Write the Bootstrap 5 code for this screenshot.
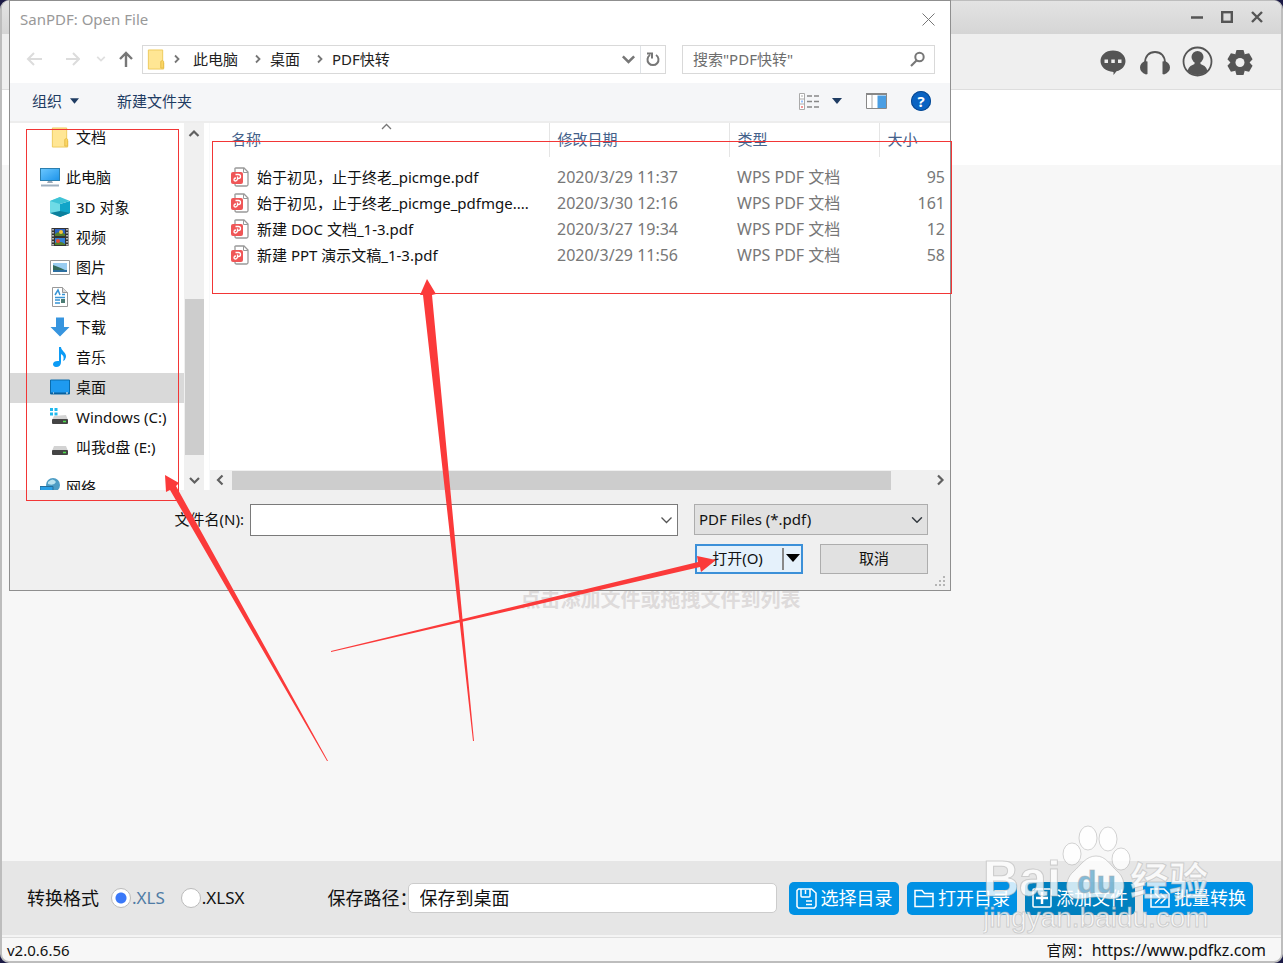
<!DOCTYPE html>
<html lang="zh-CN">
<head>
<meta charset="utf-8">
<meta name="viewport" content="width=device-width, initial-scale=1">
<title>SanPDF</title>
<link href="https://cdn.jsdelivr.net/npm/bootstrap@5.3.0/dist/css/bootstrap.min.css" rel="stylesheet">
<style>
  body { background:#1b1a45; font-family:"Noto Sans","Noto Sans CJK SC",sans-serif; font-size:15px; line-height:20px; color:#111; }
  svg { display:block; flex:none; }
  button { font:inherit; color:inherit; }
  .bare { border:0; background:none; padding:0; }
  /* main window */
  .app { border:2px solid #bdbdbd; border-top-width:1px; border-radius:9px; background:#f7f7f7; overflow:hidden; }
  .app-title { height:33px; background:linear-gradient(#e3e3e3,#d5d5d5); padding:0 18px 2px 0; gap:18px; color:#555; }
  .app-tools { height:56px; background:#efefef; border-bottom:1px solid #ddd; padding-right:26px; gap:12px; color:#555; }
  .app-tabs { height:75px; background:#fff; }
  .drop-hint { font-size:20px; line-height:28px; font-weight:700; color:#dedbdb; padding:421px 0 0 38px; }
  .app-actions { height:76px; background:#e6e6e6; padding:0 28px 0 25px; font-size:17px; border-bottom:2px solid #f4f4f4; }
  .app-actions label { white-space:nowrap; }
  .caption-text { font-size:18px; white-space:nowrap; }
  .path-label { margin:0 -10px 0 83px; }
  .app-actions .form-check-input { width:20px; height:20px; margin:0 1px 0 0; border-color:#bbb; background-image:none; flex:none; }
  .app-actions .form-check-input:checked { background:radial-gradient(#3a78f8 0 5px,#fff 6px); }
  .path-box { height:30px; border:1px solid #ccc; border-radius:5px; font-size:18px; padding:0 11px 2px; color:#111; min-width:0; }
  .btn-act { height:33px; width:110px; background:#0091e4; color:#fff; border:0; border-radius:5px; padding:0; font-size:18px; line-height:24px; }
  .btn-act.deep { background:#0080bf; }
  .app-status { height:24px; border-top:1px solid #ddd; padding:0 15px 0 5px; }
  .app-status a { color:inherit; text-decoration:none; font-size:16px; }
  /* open-file dialog */
  .dlg { left:9px; right:332px; top:0; background:#fff; border:1px solid #8f8f8f; z-index:2; }
  .dlg-title { height:38px; padding:0 14px 2px 10px; color:#999; }
  .dlg-nav { height:44px; padding:0 15px 4px 16px; color:#222; }
  .frame { height:29px; border:1px solid #d9d9d9; }
  .frame input { border:0; outline:0; background:none; color:#666; min-width:0; }
  .frame input::placeholder { color:#6d6d6d; opacity:1; }
  .search-box { width:253px; }
  .dlg-bar { height:40px; background:#f5f6f8; border-bottom:2px solid #ededed; padding:0 19px 2px 22px; color:#1f3c63; gap:38px; }
  .help-btn { width:20px; height:20px; background:#0a63c2; box-shadow:inset 0 0 0 1px #0b4990; }
  .dlg-body { height:367px; }
  .tree { width:174px; flex:none; overflow:hidden; }
  .tree a { height:30px; color:#111; text-decoration:none; padding:0 0 2px 40px; gap:6px; white-space:nowrap; flex:none; }
  .tree a.root { padding-left:30px; margin-top:10px; }
  .tree a.on { background:#d9d9d9; }
  .vbar { width:20px; flex:none; background:#f0f0f0; color:#606060; }
  .vbar .thumb { height:156px; width:19px; background:#cdcdcd; margin:auto 0 24px; }
  .pane { min-width:0; margin-left:5px; }
  .hbar { height:20px; background:#f0f0f0; color:#606060; }
  .hbar .thumb { height:19px; background:#cdcdcd; margin:0 43px 0 6px; }
  .files { table-layout:fixed; width:100%; margin:0; }
  .files th { height:34px; font-weight:400; color:#44618a; border-left:1px solid #e5e5e5; padding:0 0 2px 8px; white-space:nowrap; }
  .files th:first-child { border:0; padding-left:21px; }
  .files tbody::before { content:""; display:block; height:7px; }
  .files td { height:26px; padding:0 0 0 8px; color:#777; font-size:16px; white-space:nowrap; }
  .files td:first-child { padding-left:21px; color:#111; font-size:15px; }
  .files td:last-child { text-align:right; padding:0 5px 0 0; }
  .w-date { width:180px; } .w-type { width:150px; } .w-size { width:71px; }
  .sort-mark { left:171px; top:0; }
  .dlg-foot { background:#f0f0f0; padding:14px 22px 16px 22px; }
  .name-box { border:1px solid #7a7a7a; background:#fff; height:32px; }
  .name-box input { border:0; outline:0; min-width:0; }
  .name-label { width:218px; padding:0 6px 2px 0; text-align:right; }
  .right-col { width:234px; margin-left:16px; }
  .type-box { height:31px; border:1px solid #adadad; border-radius:0; background-color:#e1e1e1; font-size:15px; line-height:20px; padding:3px 28px 5px 4px; color:#111; background-position:right 4px center; background-size:12px; }
  .btn-dlg { height:30px; border:1px solid #adadad; background:#e1e1e1; width:108px; padding:0 0 2px; }
  .btn-open { border:2px solid #3c90d8; background:#e5f1fb; padding:0; margin-right:17px; }
  .btn-open button { height:26px; padding-bottom:2px; }
  .btn-open .drop { border-left:2px solid #888; width:19px; height:22px; padding-left:2px; }
  .grip { right:3px; bottom:2px; }
  /* overlays */
  .marks { left:0; top:0; z-index:4; pointer-events:none; }
  .wmark { right:60px; bottom:20px; z-index:1; pointer-events:none; }
</style>
</head>
<body class="vh-100 overflow-hidden position-relative">

<svg width="0" height="0" class="position-absolute">
  <symbol id="folder" viewBox="0 0 18 22"><path d="M1 1h15v13l1 1v6H1z" fill="#ffe694" stroke="#eec95a"/><path d="M14 20v-7q2-2 3 0v7z" fill="#fbd664" stroke="#e6bd48"/></symbol>
  <symbol id="pdf" viewBox="0 0 18 20"><path d="M4.500 1h8.500l4 4v12.500q0 1.500-1.500 1.500h-10q-1.500 0-1.500-1.500V2.500Q3.500 1 5 1z" fill="#fff" stroke="#999" stroke-width="1.300"/><path d="M12.500 1v4.500H17" fill="none" stroke="#999"/><rect y="5" width="12" height="12" rx="2" fill="#ef5657"/><path d="M4.500 7.500h3a2 2 0 0 1 0 4H6.500M6.500 9.500V12q-.5 2-2 2t-1.500-1.500 2-1.500" fill="none" stroke="#fff" stroke-width="1.300"/></symbol>
  <symbol id="down" viewBox="0 0 12 12"><path d="M1.500 3.500 6 8l4.500-4.500" fill="none" stroke="currentColor" stroke-width="2"/></symbol>
  <symbol id="sep" viewBox="0 0 8 10"><path d="m2 1.500 3.500 3.500L2 8.500" fill="none" stroke="#777" stroke-width="1.800"/></symbol>
  <symbol id="tri" viewBox="0 0 10 6"><path d="M0 0h10L5 6z" fill="currentColor"/></symbol>
</svg>

<main class="app h-100 d-flex flex-column">
  <header class="app-title d-flex align-items-center justify-content-end">
    <button class="bare" aria-label="最小化"><svg width="12" height="12"><path d="M0 6.500h12" stroke="currentColor" stroke-width="2.500"/></svg></button>
    <button class="bare" aria-label="最大化"><svg width="12" height="12"><rect x="1.200" y="1.200" width="9.600" height="9.600" fill="none" stroke="currentColor" stroke-width="2.400"/></svg></button>
    <button class="bare" aria-label="关闭"><svg width="12" height="12"><path d="m1 1 10 10M11 1 1 11" stroke="currentColor" stroke-width="2.400"/></svg></button>
  </header>
  <nav class="app-tools d-flex align-items-center justify-content-end">
    <button class="bare" aria-label="消息"><svg width="30" height="30"><path d="M15 3.500c7.500 0 12.500 5 12.500 10.500 0 5-3.500 9-9 10.300L15.500 28v-3C7.500 24.500 2.500 19.500 2.500 14 2.500 8.500 7.500 3.500 15 3.500z" fill="currentColor"/><path d="M6.500 12.500h3.500v3.500H6.500zM13.300 12.500h3.500v3.500h-3.500zM20 12.500h3.500v3.500H20z" fill="#efefef"/></svg></button>
    <button class="bare" aria-label="客服"><svg width="30" height="30"><path d="M5 16C5 9 9 5 15 5s10 4 10 11" fill="none" stroke="currentColor" stroke-width="1.800"/><path d="M7.500 14.500V27l-1.500.5Q0 25 0 20.500T5 14zM22.500 14.500V27l1.500.5q6-2.500 6-7T25 14z" fill="currentColor"/></svg></button>
    <button class="bare" aria-label="账户"><svg width="31" height="31"><circle cx="15.500" cy="15.500" r="14" fill="none" stroke="currentColor" stroke-width="1.800"/><circle cx="15.500" cy="11" r="6" fill="currentColor"/><path d="M12.500 15h6v3l4 2q2.500 2 3 5a14.500 14.500 0 0 1-20 0q.5-3 3-5l4-2z" fill="currentColor"/></svg></button>
    <button class="bare" aria-label="设置"><svg width="30" height="30" viewBox="-15 -15.500 30 30"><g fill="currentColor"><circle r="9.500"/><g id="t"><path d="M-4.800-8-3.500-12.500h7L4.800-8zM-4.800 8-3.500 12.500h7L4.800 8z"/></g><use href="#t" transform="rotate(60)"/><use href="#t" transform="rotate(120)"/></g><circle r="4.500" fill="#efefef"/></svg></button>
  </nav>
  <div class="app-tabs"></div>
  <section class="flex-grow-1 overflow-hidden text-center"><p class="drop-hint mb-0">点击添加文件或拖拽文件到列表</p></section>

  <form class="app-actions d-flex align-items-center" onsubmit="return false">
    <span class="caption-text me-2 pe-1">转换格式</span>
    <input class="form-check-input" type="radio" name="fmt" id="xls" checked><label for="xls" style="color:#4f7ba5">.XLS</label>
    <input class="form-check-input ms-3" type="radio" name="fmt" id="xlsx"><label for="xlsx">.XLSX</label>
    <label for="path" class="caption-text path-label">保存路径：</label>
    <input class="path-box flex-grow-1" id="path" value="保存到桌面">
    <div class="d-flex gap-2 ms-2 ps-1">
      <button class="btn-act d-flex align-items-center justify-content-center gap-1"><svg width="21" height="21" fill="none" stroke="#fff" stroke-width="1.500"><path d="M2.500 1h13l4.500 4v13l-1.500 2H2.500L1 18.500v-16zM5 1v7q0 1 1 1h7q1 0 1-1V1M9.500 2v4M10 13h6M10 16.500h6"/></svg>选择目录</button>
      <button class="btn-act d-flex align-items-center justify-content-center gap-1"><svg width="20" height="20" fill="none" stroke="#fff" stroke-width="1.500"><path d="M1 18.500v-16h7l2.500 3H19v13zM1 8.500h18"/></svg>打开目录</button>
      <button class="btn-act deep d-flex align-items-center justify-content-center gap-1"><svg width="20" height="20" fill="none" stroke="#fff" stroke-width="1.500"><rect x="1" y="1" width="18" height="18" rx="1"/><path d="M10 4v12M4 10h12" stroke-width="2.500"/></svg>添加文件</button>
      <button class="btn-act d-flex align-items-center justify-content-center gap-1"><svg width="20" height="20" fill="none" stroke="#fff" stroke-width="1.500"><path d="M1 1h13l5 5v13H1zM5 5.500l5 5-5 5M10.500 5.500l5 5-5 5"/></svg>批量转换</button>
    </div>
  </form>
  <footer class="app-status d-flex align-items-center justify-content-between"><span>v2.0.6.56</span><span>官网：<a href="https://www.pdfkz.com">https://www.pdfkz.com</a></span></footer>
</main>

<section class="dlg position-absolute" role="dialog" aria-label="SanPDF: Open File">
  <header class="dlg-title d-flex align-items-center justify-content-between"><span>SanPDF: Open File</span>
    <button class="bare" aria-label="关闭"><svg width="15" height="15"><path d="m1.500 1.500 12 12M13.500 1.500l-12 12" stroke="#777"/></svg></button></header>

  <div class="dlg-nav d-flex align-items-center">
    <button class="bare" aria-label="后退"><svg width="16" height="14"><path d="M16 7H2M8 1 2 7l6 6" fill="none" stroke="#dcdcdc" stroke-width="2"/></svg></button>
    <button class="bare ms-4" aria-label="前进"><svg width="14" height="14"><path d="M0 7h13M7 1l6 6-6 6" fill="none" stroke="#dcdcdc" stroke-width="2"/></svg></button>
    <button class="bare ms-3 me-2 text-black-50 opacity-25" aria-label="最近"><svg width="10" height="10"><use href="#down"/></svg></button>
    <button class="bare ms-1 me-2" aria-label="向上"><svg width="16" height="16"><path d="M8 16V2M2 8l6-6 6 6" fill="none" stroke="#777" stroke-width="2.400"/></svg></button>
    <div class="frame flex-grow-1 d-flex align-items-center ps-1">
      <svg width="18" height="21"><use href="#folder"/></svg>
      <svg class="mx-2" width="8" height="10"><use href="#sep"/></svg><span class="ms-1">此电脑</span>
      <svg class="mx-2 ms-3" width="8" height="10"><use href="#sep"/></svg><span>桌面</span>
      <svg class="mx-2 ms-3" width="8" height="10"><use href="#sep"/></svg><span>PDF快转</span>
      <button class="bare ms-auto me-1" aria-label="展开路径" style="color:#777"><svg width="15" height="15"><use href="#down"/></svg></button>
      <button class="bare h-100 border-start px-1" aria-label="刷新"><svg width="16" height="16"><path d="M5 4A5.500 5.500 0 1 0 11 4M2 2.500h5v5" fill="none" stroke="#777" stroke-width="2"/></svg></button>
    </div>
    <div class="frame search-box d-flex align-items-center ms-3 px-2"><input class="flex-grow-1" type="search" aria-label="搜索" placeholder='搜索"PDF快转"'><svg width="17" height="17"><circle cx="10.500" cy="6" r="4.200" fill="none" stroke="#777" stroke-width="2"/><path d="M8 9 2 15" stroke="#777" stroke-width="2.200"/></svg></div>
  </div>

  <div class="dlg-bar d-flex align-items-center">
    <button class="bare d-flex align-items-center gap-2">组织 <svg width="9" height="6"><use href="#tri"/></svg></button>
    <button class="bare">新建文件夹</button>
    <div class="ms-auto d-flex align-items-center gap-4">
      <button class="bare d-flex align-items-center gap-2" aria-label="更改视图"><svg width="21" height="17" class="me-1"><path d="M.5.5h5v16h-5zM.5 6h5M.5 11h5" fill="#fff" stroke="#aaa"/><path d="M8 3h5M15 3h5M8 8.500h5M15 8.500h5M8 14h5M15 14h5" stroke="#888" stroke-width="1.300"/><path d="M2.500 3h1" stroke="#555"/><path d="M2.500 8.500h1" stroke="#38f" stroke-width="2"/><path d="M2.500 14h1" stroke="#e33" stroke-width="2"/></svg><svg width="10" height="6"><use href="#tri"/></svg></button>
      <button class="bare" aria-label="预览窗格"><svg width="21" height="16"><path d="M.5.500h20v15H.5z" fill="#fff" stroke="#888"/><path d="M0 1h21" stroke="#888" stroke-width="2"/><path d="M6 2v13" stroke="#aaa"/><path d="M11.500 2.500H20v12.500h-8.500z" fill="#4a9ee3"/></svg></button>
      <button class="bare help-btn rounded-circle fw-bold text-white" aria-label="帮助">?</button>
    </div>
  </div>

  <div class="dlg-body d-flex">
    <nav class="tree d-flex flex-column">
      <a href="#" class="d-flex align-items-center"><svg width="20" height="21"><use href="#folder"/></svg>文档</a>
      <a href="#" class="root d-flex align-items-center"><svg width="20" height="20"><defs><linearGradient id="b" x2="1" y2="1"><stop stop-color="#6cc8ff"/><stop offset="1" stop-color="#1c93ea"/></linearGradient></defs><rect x=".5" y="1.500" width="19" height="12" fill="url(#b)" stroke="#2c7fae"/><path d="M8 14h4l1 2H7z" fill="#9aa9b8"/><path d="M1 18.500h18" stroke="#9fb0c0" stroke-width="2"/></svg>此电脑</a>
      <a href="#" class="d-flex align-items-center"><svg width="20" height="20"><path d="m0 4 10-4v20L0 16z" fill="#6fdbe6"/><path d="m10 7 10-3v12l-10 4z" fill="#10a4c8"/><path d="m0 4 10-4 10 4-10 3z" fill="#3fc3d6"/><path d="m0 16 10-2 10 2-10 4z" fill="#0b7f9c"/></svg>3D 对象</a>
      <a href="#" class="d-flex align-items-center"><svg width="20" height="20"><path d="M1.500 1h17v18h-17z" fill="#333"/><path d="M5 2h10v7H5z" fill="#2c62c4"/><path d="M5 11h10v7H5z" fill="#3481d8"/><path d="M5 7q4-4 10 0v2H5zM5 16q5-3 10 1v1H5z" fill="#55812e"/><circle cx="11" cy="5" r="2" fill="#f6c43a"/><circle cx="8" cy="14" r="2" fill="#e34d35"/><path d="M3 2v17M17 2v17" stroke="#ddd" stroke-width="1.500" stroke-dasharray="1.500 1.500"/></svg>视频</a>
      <a href="#" class="d-flex align-items-center"><svg width="20" height="20"><path d="M.5 3.500h19v14H.5z" fill="#fff" stroke="#999"/><path d="M3 6h14v9H3z" fill="#9acdf1"/><path d="M3 8q6 2 14 6v1H3z" fill="#356b5b"/><path d="M3 13h14v2H3z" fill="#2c6fa0"/></svg>图片</a>
      <a href="#" class="d-flex align-items-center"><svg width="20" height="20"><path d="M2.500.5h10l5 5v14h-15z" fill="#fff" stroke="#999"/><path d="M12.500.5v5h5" fill="#ddd" stroke="#999"/><path d="m5 8 3-5 2 5M12 7.500h3M5 10.500h10M5 13h5M5 16h5" stroke="#3694d5" stroke-width="1.500" fill="none"/><path d="M11 12h4v4h-4z" fill="#4a7c74"/></svg>文档</a>
      <a href="#" class="d-flex align-items-center"><svg width="20" height="20"><path d="M6 .5h8V10h5.500L10 19.500.5 10H6z" fill="#3795df"/></svg>下载</a>
      <a href="#" class="d-flex align-items-center"><svg width="20" height="20"><path d="M9 0h2c0 4 5.500 5 5 10q-.5 3-3 4 2-5-2-7v8q0 5-5 5-3-.5-3-3 .5-3.500 6-3z" fill="#0c9bf5"/></svg>音乐</a>
      <a href="#" class="on d-flex align-items-center"><svg width="20" height="20"><path d="M.5 3h19v14H.5z" fill="#1e9af0" stroke="#0b6cac"/><path d="M1 15.500h18V17H1z" fill="#085f9d"/><path d="M3 16h1M16 16h2" stroke="#fff"/></svg>桌面</a>
      <a href="#" class="d-flex align-items-center"><svg width="20" height="20"><path d="M0 1h3v3H0zM4.500 1h3v3h-3zM0 5.500h3v3H0zM4.500 5.500h3v3h-3z" fill="#1fb9ee"/><path d="m4 9 12-1 2 5H2z" fill="#d3d3d3"/><rect x="2" y="12" width="16" height="5" rx="1" fill="#444"/><path d="M13 14.500h3" stroke="#4fe04f" stroke-width="1.500"/></svg>Windows (C:)</a>
      <a href="#" class="d-flex align-items-center"><svg width="20" height="20"><path d="m4 9h12l2 5H2z" fill="#d3d3d3"/><rect x="2" y="13" width="16" height="5" rx="1" fill="#444"/><path d="M13 15.500h3" stroke="#4fe04f" stroke-width="1.500"/></svg>叫我d盘 (E:)</a>
      <a href="#" class="root d-flex align-items-center"><svg width="20" height="20"><circle cx="13" cy="8" r="7" fill="#4d9cc4"/><path d="M8 5q5-5 8 0-2 4-8 2z" fill="#b9e2ef"/><path d="M0 9.500h13v9H0z" fill="#2aa0e6" stroke="#256f9d"/></svg>网络</a>
    </nav>
    <div class="vbar d-flex flex-column align-items-center">
      <svg class="mt-1" width="12" height="14"><path d="m1.500 9 4.500-4.500L10.500 9" fill="none" stroke="currentColor" stroke-width="2.200"/></svg>
      <div class="thumb"></div>
      <svg class="mb-2" width="13" height="3" overflow="visible"><path d="m2-1 4.500 4.500L11-1" fill="none" stroke="currentColor" stroke-width="2.200"/></svg>
    </div>
    <div class="pane flex-grow-1 d-flex flex-column border-start border-light">
      <div class="flex-grow-1 position-relative">
        <table class="files">
          <colgroup><col><col class="w-date"><col class="w-type"><col class="w-size"></colgroup>
          <thead><tr><th>名称</th><th>修改日期</th><th>类型</th><th>大小</th></tr></thead>
          <tbody>
            <tr><td><div class="d-flex align-items-center gap-2"><svg width="18" height="20"><use href="#pdf"/></svg>始于初见，止于终老_picmge.pdf</div></td><td>2020/3/29 11:37</td><td>WPS PDF 文档</td><td>95</td></tr>
            <tr><td><div class="d-flex align-items-center gap-2"><svg width="18" height="20"><use href="#pdf"/></svg>始于初见，止于终老_picmge_pdfmge....</div></td><td>2020/3/30 12:16</td><td>WPS PDF 文档</td><td>161</td></tr>
            <tr><td><div class="d-flex align-items-center gap-2"><svg width="18" height="20"><use href="#pdf"/></svg>新建 DOC 文档_1-3.pdf</div></td><td>2020/3/27 19:34</td><td>WPS PDF 文档</td><td>12</td></tr>
            <tr><td><div class="d-flex align-items-center gap-2"><svg width="18" height="20"><use href="#pdf"/></svg>新建 PPT 演示文稿_1-3.pdf</div></td><td>2020/3/29 11:56</td><td>WPS PDF 文档</td><td>58</td></tr>
          </tbody>
        </table>
        <svg class="sort-mark position-absolute" width="11" height="7"><path d="m1 6 4.500-4.500L10 6" fill="none" stroke="#777" stroke-width="1.300"/></svg>
      </div>
      <div class="hbar d-flex align-items-center">
        <svg class="ms-1" width="12" height="12"><path d="M8.500 1.500 4 6l4.500 4.500" fill="none" stroke="currentColor" stroke-width="2.200"/></svg>
        <div class="thumb flex-grow-1"></div>
        <svg class="me-1" width="12" height="12"><path d="M4 1.500 8.500 6 4 10.500" fill="none" stroke="currentColor" stroke-width="2.200"/></svg>
      </div>
    </div>
  </div>

  <form class="dlg-foot position-relative" onsubmit="return false">
    <div class="d-flex">
      <label class="name-label align-self-center" for="fname">文件名(N):</label>
      <div class="name-box flex-grow-1 d-flex align-items-center pe-1"><input id="fname" class="flex-grow-1"><button class="bare" aria-label="历史"><svg width="13" height="12"><path d="m1.500 3.500 5 5 5-5" fill="none" stroke="#555" stroke-width="1.300"/></svg></button></div>
      <div class="right-col"><select class="form-select type-box" aria-label="文件类型"><option>PDF Files (*.pdf)</option></select></div>
    </div>
    <div class="d-flex justify-content-end mt-2">
      <div class="btn-dlg btn-open d-flex align-items-center"><button class="bare flex-grow-1 pe-1">打开(O)</button><button class="bare drop" aria-label="打开方式"><svg width="14" height="8"><path d="M0 0h14L7 8z"/></svg></button></div>
      <button class="btn-dlg">取消</button>
    </div>
    <svg class="grip position-absolute" width="12" height="12" fill="#b5b5b5"><path d="M8 0h2v2H8zM4 4h2v2H4zM8 4h2v2H8zM0 8h2v2H0zM4 8h2v2H4zM8 8h2v2H8z"/></svg>
  </form>
</section>

<!-- tutorial arrows and frames -->
<svg class="marks position-absolute" width="960" height="770">
  <g fill="none" stroke="#f23636"><rect x="26.500" y="129.500" width="152" height="371"/><rect x="212.500" y="141.500" width="739" height="152"/></g>
  <g fill="#fb3a3a">
    <path d="M165 475 179 483 176 486 328 761 327 761 170 490 166 492z"/>
    <path d="M427 279 436 294 432 295 474 741H473L423 295 420 295z"/>
    <path d="M716 560 701 572 700 567 331 652V651L698 562 697 556z"/>
  </g>
</svg>

<!-- site watermark -->
<svg class="wmark position-absolute" width="240" height="122" font-family="Liberation Sans, Noto Sans CJK SC, sans-serif" fill="#fff" fill-opacity=".8" stroke="#aaa" stroke-opacity=".5">
  <text x="0" y="75" font-size="50" font-weight="700">Bai</text>
  <ellipse cx="89" cy="33" rx="9" ry="11"/><ellipse cx="105" cy="17" rx="9" ry="12"/><ellipse cx="125" cy="18" rx="9" ry="12"/><ellipse cx="138" cy="38" rx="9" ry="11"/>
  <path d="M113 35c10 0 14 9 22 16 9 8 8 26-5 27-8 0-11-2-17-2s-11 2-18 2c-14-1-14-19-5-27 8-7 13-16 23-16z"/>
  <text x="94" y="72" font-size="32" font-weight="700" fill="#72b2d4" fill-opacity=".9">du</text>
  <text x="147" y="74" font-size="39" font-weight="700">经验</text>
  <text x="0" y="106" font-size="28">jingyan.baidu.com</text>
</svg>
<script src="https://cdn.jsdelivr.net/npm/bootstrap@5.3.0/dist/js/bootstrap.bundle.min.js"></script>
</body>
</html>
